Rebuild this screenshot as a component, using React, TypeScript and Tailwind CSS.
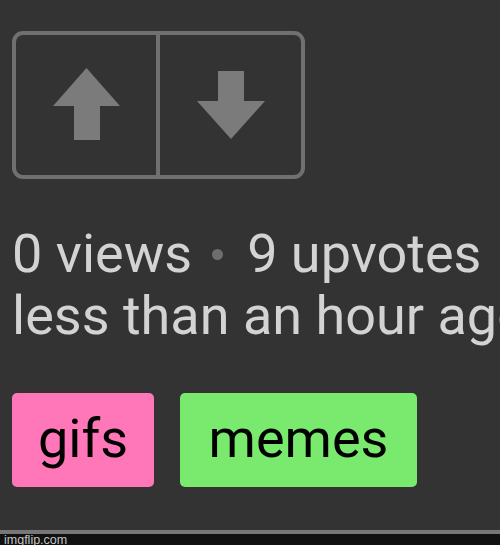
import React from 'react'

function UpArrow() {
  return (
    <svg width="67" height="72" viewBox="0 0 67 72" className="block">
      <polygon points="33.5,0 67,38 47,38 47,72 21,72 21,38 0,38" fill="#7b7b7b" />
    </svg>
  )
}

function DownArrow() {
  return (
    <svg width="68" height="68" viewBox="0 0 68 68" className="block">
      <polygon points="21,0 47,0 47,30 68,30 34,68 0,30 21,30" fill="#7b7b7b" />
    </svg>
  )
}

export default function App() {
  return (
    <div
      className="relative flex h-[545px] w-[500px] flex-col overflow-hidden bg-[#333333]"
      style={{ fontFamily: 'Roboto, "Noto Sans", sans-serif' }}
    >
      <div className="flex-1 pl-3">
        {/* vote buttons */}
        <div className="mt-[31px] flex h-[148px] w-[293px] rounded-[11px] border-4 border-[#707070]">
          <div className="flex w-[140px] items-center justify-center pb-[3px]">
            <UpArrow />
          </div>
          <div className="w-1 bg-[#707070]" />
          <div className="flex flex-1 items-center justify-center">
            <DownArrow />
          </div>
        </div>

        {/* stats */}
        <div className="mt-[44px] whitespace-nowrap text-[54px] leading-[62px] text-[#d3d3d3]">
          <div className="flex items-center">
            <span>0 views</span>
            <span className="ml-[20px] mr-[24px] inline-block h-[11px] w-[11px] rounded-full bg-[#6e6e6e]" />
            <span>9 upvotes</span>
          </div>
          <div>less than an hour ago</div>
        </div>

        {/* tags */}
        <div className="mt-[46px] flex gap-[26px]">
          <div className="flex h-[94px] w-[142px] items-center justify-center rounded-[5px] bg-[#ff77b8] pb-[4px] text-[54px] text-black">
            gifs
          </div>
          <div className="flex h-[94px] w-[237px] items-center justify-center rounded-[5px] bg-[#79ea6e] pb-[4px] text-[54px] text-black">
            memes
          </div>
        </div>
      </div>

      <div className="h-1 bg-[#777777]" />
      <div className="h-[11px] bg-[#111111]" />
      <span
        className="absolute bottom-[-1px] left-[4px] text-[12.5px] leading-none text-[#c4c4c4]"
        style={{ fontFamily: '"Liberation Sans", Arial, sans-serif' }}
      >
        imgflip.com
      </span>
    </div>
  )
}
